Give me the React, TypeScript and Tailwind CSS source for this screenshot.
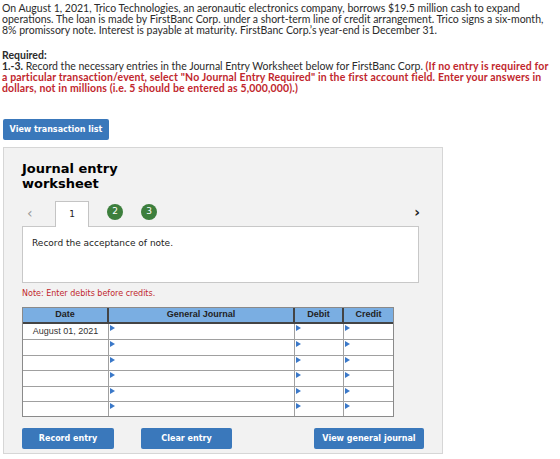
import React from "react";

const sans = { fontFamily: "Lato, 'Open Sans', sans-serif" };
const verdana = { fontFamily: "'DejaVu Sans', Verdana, sans-serif" };
const arial = { fontFamily: "'Liberation Sans', Arial, sans-serif" };

function Marker() {
  return (
    <svg className="absolute left-[1px] top-[1px]" width="5" height="6" viewBox="0 0 5 6">
      <polygon points="0,0 5,3 0,6" fill="#3a78c8" />
    </svg>
  );
}

function Row({ date }: { date?: string }) {
  return (
    <div className="flex h-[15.4px] border-t border-[#a0a0a0] bg-white">
      <div className="w-[86px] border-r border-[#a0a0a0] text-[9px] text-[#333] flex items-center justify-center" style={arial}>
        {date}
      </div>
      <div className="relative w-[186px] border-r border-[#a0a0a0]">
        <Marker />
      </div>
      <div className="relative w-[49px] border-r border-[#a0a0a0]">
        <Marker />
      </div>
      <div className="relative flex-1">
        <Marker />
      </div>
    </div>
  );
}

export default function App() {
  return (
    <div className="w-[560px] h-[459px] bg-white overflow-hidden text-[#2b2b2b]">
      <div className="pl-[2px] pt-[3px] pr-[4px] text-[10.5px] leading-[11px]" style={sans}>
        <p>
          On August 1, 2021, Trico Technologies, an aeronautic electronics company, borrows $19.5 million cash to expand
          operations. The loan is made by FirstBanc Corp. under a short-term line of credit arrangement. Trico signs a six-month,
          8% promissory note. Interest is payable at maturity. FirstBanc Corp.’s year-end is December 31.
        </p>
        <p className="mt-[14px] font-bold">Required:</p>
        <p className="whitespace-nowrap">
          <span className="font-bold">1.-3.</span> Record the necessary entries in the Journal Entry Worksheet below for FirstBanc Corp.{" "}
          <span className="font-bold text-[#c1272d] tracking-[0.15px]">
            (If no entry is required for
            <br />
            a particular transaction/event, select "No Journal Entry Required" in the first account field. Enter your answers in
            <br />
            dollars, not in millions (i.e. 5 should be entered as 5,000,000).)
          </span>
        </p>
      </div>

      <div className="ml-[3px] mt-[25px] w-[106px] h-[21px] rounded-[2px] bg-[#3a78bb] text-white text-[8px] font-bold flex items-center justify-center" style={verdana}>
        View transaction list
      </div>

      <div className="ml-[3px] mt-[7px] w-[440px] h-[307px] bg-[#f2f2f2] border border-[#d6d6d6] pl-[18px] pt-[13px]">
        <div className="text-[13px] leading-[15px] font-bold text-black" style={verdana}>
          Journal entry
          <br />
          worksheet
        </div>

        <div className="relative mt-[10px] h-[25px] w-[396px]">
          <span className="absolute left-[5px] top-[2px] text-[14px] text-[#999]" style={verdana}>‹</span>
          <div className="absolute left-[33px] top-0 w-[34px] h-[26px] bg-white border border-b-0 border-[#c4c4c4] z-10 flex items-center justify-center text-[9px] text-[#222]" style={verdana}>
            1
          </div>
          <div className="absolute left-[85px] top-[3px] w-[16px] h-[16px] rounded-full bg-[#3d7f3d] text-white text-[9px] flex items-center justify-center" style={verdana}>2</div>
          <div className="absolute left-[119px] top-[3px] w-[16px] h-[16px] rounded-full bg-[#3d7f3d] text-white text-[9px] flex items-center justify-center" style={verdana}>3</div>
          <span className="absolute right-[-2px] top-[1px] text-[14px] font-bold text-[#222]" style={verdana}>›</span>
        </div>

        <div className="w-[397px] h-[57px] bg-white border border-[#c8c8c8] pl-[9px] pt-[10px] text-[9px] text-[#222]" style={verdana}>
          Record the acceptance of note.
        </div>

        <div className="mt-[5px] text-[8px] leading-[12px] text-[#c1272d]" style={verdana}>Note: Enter debits before credits.</div>

        <div className="mt-[7px] w-[372px] border border-[#8a8a8a] bg-white">
          <div className="flex h-[16px] bg-[#7aaee2] border-b-2 border-[#444] text-[9px] font-bold text-[#222]" style={arial}>
            <div className="w-[86px] border-r-2 border-[#444] flex items-center justify-center">Date</div>
            <div className="w-[186px] border-r-2 border-[#444] flex items-center justify-center">General Journal</div>
            <div className="w-[49px] border-r-2 border-[#444] flex items-center justify-center">Debit</div>
            <div className="flex-1 flex items-center justify-center">Credit</div>
          </div>
          <div className="[&>div:first-child]:border-t-0">
            <Row date="August 01, 2021" />
            <Row />
            <Row />
            <Row />
            <Row />
            <Row />
          </div>
        </div>

        <div className="mt-[11px] flex w-[402px] text-[8px] font-bold text-white" style={verdana}>
          <div className="w-[92px] h-[21px] rounded-[2px] bg-[#3a78bb] flex items-center justify-center">Record entry</div>
          <div className="ml-[27px] w-[91px] h-[21px] rounded-[2px] bg-[#3a78bb] flex items-center justify-center">Clear entry</div>
          <div className="ml-auto w-[110px] h-[21px] rounded-[2px] bg-[#3a78bb] flex items-center justify-center">View general journal</div>
        </div>
      </div>
    </div>
  );
}
